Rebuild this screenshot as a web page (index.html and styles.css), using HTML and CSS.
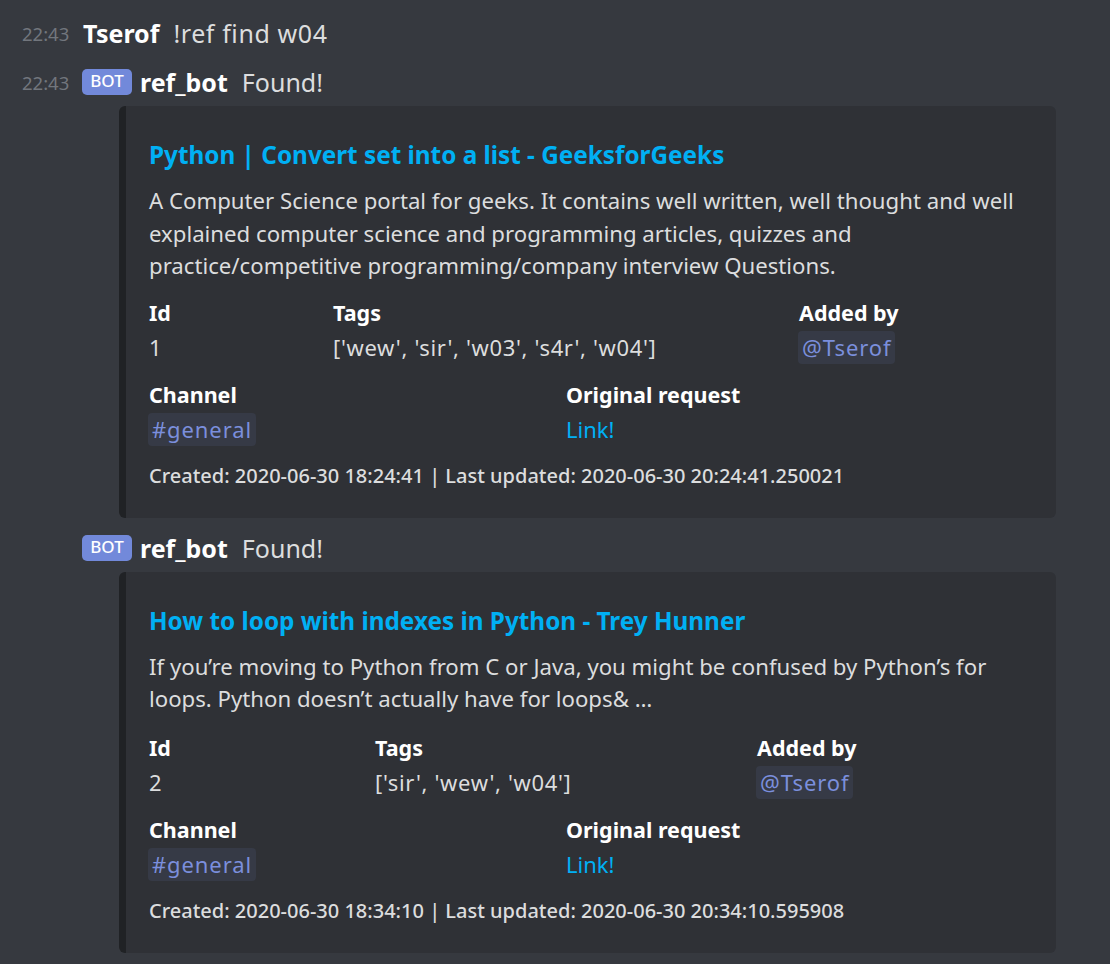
FILE: index.html
```html
<!DOCTYPE html>
<html lang="en">
<head>
<meta charset="utf-8">
<title>ref_bot</title>
<link rel="stylesheet" href="styles.css">
</head>
<body>
<div class="chat">
  <div class="msg first">
    <span class="time">22:43</span>
    <span class="author">Tserof</span>
    <span class="text cmd">!ref find w04</span>
  </div>

  <div class="msg">
    <span class="time">22:43</span>
    <span class="bot-tag">BOT</span>
    <span class="author">ref_bot</span>
    <span class="text">Found!</span>
  </div>
  <div class="embed">
    <a class="embed-title">Python | Convert set into a list - GeeksforGeeks</a>
    <div class="embed-desc">A Computer Science portal for geeks. It contains well written, well thought and well explained computer science and programming articles, quizzes and practice/competitive programming/company interview Questions.</div>
    <div class="fields">
      <div class="field-row row3 e1">
        <div class="field"><div class="fname">Id</div><div class="fvalue">1</div></div>
        <div class="field"><div class="fname">Tags</div><div class="fvalue tags">['wew', 'sir', 'w03', 's4r', 'w04']</div></div>
        <div class="field"><div class="fname">Added by</div><div class="fvalue"><span class="mention">@Tserof</span></div></div>
      </div>
      <div class="field-row row2">
        <div class="field"><div class="fname">Channel</div><div class="fvalue"><span class="mention">#general</span></div></div>
        <div class="field"><div class="fname">Original request</div><div class="fvalue"><a class="link">Link!</a></div></div>
      </div>
    </div>
    <div class="footer">Created: 2020-06-30 18:24:41 | Last updated: 2020-06-30 20:24:41.250021</div>
  </div>

  <div class="msg">
    <span class="time"></span>
    <span class="bot-tag">BOT</span>
    <span class="author">ref_bot</span>
    <span class="text">Found!</span>
  </div>
  <div class="embed">
    <a class="embed-title">How to loop with indexes in Python - Trey Hunner</a>
    <div class="embed-desc">If you’re moving to Python from C or Java, you might be confused by Python’s for loops. Python doesn’t actually have for loops&amp; …</div>
    <div class="fields e2-fields">
      <div class="field-row row3 e2">
        <div class="field"><div class="fname">Id</div><div class="fvalue">2</div></div>
        <div class="field"><div class="fname">Tags</div><div class="fvalue tags">['sir', 'wew', 'w04']</div></div>
        <div class="field"><div class="fname">Added by</div><div class="fvalue"><span class="mention">@Tserof</span></div></div>
      </div>
      <div class="field-row row2">
        <div class="field"><div class="fname">Channel</div><div class="fvalue"><span class="mention">#general</span></div></div>
        <div class="field"><div class="fname">Original request</div><div class="fvalue"><a class="link">Link!</a></div></div>
      </div>
    </div>
    <div class="footer">Created: 2020-06-30 18:34:10 | Last updated: 2020-06-30 20:34:10.595908</div>
  </div>
</div>
</body>
</html>
```

FILE: styles.css
```css
html, body {
  margin: 0;
  padding: 0;
  background: #36393f;
}
body {
  font-family: "Noto Sans", "Open Sans", sans-serif;
  color: #dcddde;
  height: 964px;
  overflow: hidden;
}
.chat {
  padding-top: 15px;
}
.msg {
  display: flex;
  align-items: center;
  height: 36px;
  padding-left: 22px;
  margin-top: 12px;
}
.msg.first {
  margin-top: 0;
}
.msg.first + .msg {
  margin-top: 13px;
}
.time {
  width: 61px;
  flex: none;
  font-size: 18.5px;
  color: #72767d;
}
.bot-tag {
  display: inline-flex;
  align-items: center;
  justify-content: center;
  box-sizing: border-box;
  height: 26px;
  width: 50px;
  padding-bottom: 3px;
  margin: 0 8px 0 -1px;
  border-radius: 5px;
  background: #7289da;
  color: #fff;
  font-size: 17px;
  font-weight: 500;
}
.author {
  font-size: 25px;
  font-weight: 700;
  color: #fff;
  margin-right: 14px;
}
.text {
  font-size: 25px;
  color: #dcddde;
}
.text.cmd {
  letter-spacing: 0.6px;
}
.embed {
  margin: 6px 0 0 119px;
  width: 937px;
  box-sizing: border-box;
  background: #2f3136;
  border-left: 7px solid #202225;
  border-radius: 6px;
  padding: 33px 24px 30px 23px;
}
.embed-title {
  display: block;
  font-size: 24.3px;
  line-height: 32px;
  font-weight: 700;
  color: #00b0f4;
}
.embed-desc {
  margin-top: 14px;
  font-size: 22.2px;
  line-height: 32.5px;
  color: #dcddde;
}
.fields {
  margin-top: 12px;
  display: flex;
  flex-direction: column;
  gap: 12px;
}
.fields.e2-fields {
  margin-top: 14px;
}
.field-row {
  display: grid;
}
.row3.e1 {
  grid-template-columns: 184px 466px 1fr;
}
.row3.e2 {
  grid-template-columns: 226px 382px 1fr;
}
.row2 {
  grid-template-columns: 417px 1fr;
}
.fname {
  font-size: 21.5px;
  line-height: 35px;
  font-weight: 700;
  color: #fff;
}
.fvalue {
  font-size: 22px;
  line-height: 35px;
  color: #dcddde;
}
.fvalue.tags {
  letter-spacing: 0.65px;
}
.mention {
  display: inline-block;
  line-height: 33px;
  padding: 0 4px;
  margin-left: -1px;
  border-radius: 4px;
  background: rgba(114, 137, 218, 0.1);
  color: #7b8fdc;
  letter-spacing: 0.9px;
}
.link {
  color: #00b0f4;
}
.footer {
  margin-top: 17px;
  font-size: 20px;
  line-height: 24px;
  font-weight: 500;
  color: #dcddde;
}
```
